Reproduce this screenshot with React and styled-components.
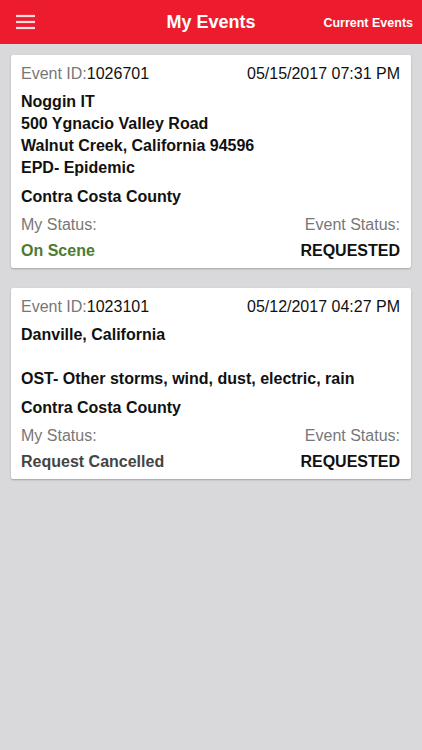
import React from 'react'
import styled, { createGlobalStyle } from 'styled-components'

const GlobalStyle = createGlobalStyle`
  html, body {
    margin: 0;
    padding: 0;
    background: #d9d9db;
  }
  body {
    font-family: "Liberation Sans", Arial, sans-serif;
    -webkit-font-smoothing: antialiased;
  }
`

const Screen = styled.div`
  width: 422px;
  min-height: 750px;
  background: #d9d9db;
  display: flex;
  flex-direction: column;
`

const Header = styled.div`
  height: 44px;
  background: #ec1c2e;
  display: grid;
  grid-template-columns: 1fr auto 1fr;
  align-items: center;
  color: #fff;
`

const MenuButton = styled.div`
  padding-left: 16px;
  display: flex;
  align-items: center;
`

const Title = styled.div`
  font-size: 18px;
  font-weight: bold;
  padding-top: 1px;
`

const HeaderLink = styled.div`
  justify-self: end;
  padding-right: 9px;
  padding-top: 1px;
  font-size: 12.5px;
  font-weight: bold;
`

const List = styled.div`
  display: flex;
  flex-direction: column;
  gap: 20px;
  padding: 11px 11px;
`

const Card = styled.div`
  background: #fff;
  border-radius: 2px;
  box-shadow: 0 1px 2px rgba(0, 0, 0, 0.25);
  padding: 8px 11px 6px 10px;
  display: flex;
  flex-direction: column;
  font-size: 16px;
  line-height: 22px;
  color: #111;
`

const Row = styled.div`
  display: flex;
  justify-content: space-between;
  align-items: baseline;
  margin-top: ${p => p.$gap || 0}px;
`

const Label = styled.span`
  color: #777;
`

const Value = styled.span`
  color: #111;
`

const Details = styled.div`
  margin-top: 6px;
  font-weight: bold;
  white-space: pre-line;
`

const County = styled.div`
  margin-top: 7px;
  font-weight: bold;
`

const Status = styled.span`
  font-weight: bold;
  color: ${p => p.$color || '#111'};
`

const Hamburger = () => (
  <svg width="20" height="16" viewBox="0 0 20 16">
    <g stroke="rgba(255,255,255,0.85)" strokeWidth="2.2">
      <line x1="0" y1="2" x2="19" y2="2" />
      <line x1="0" y1="8" x2="19" y2="8" />
      <line x1="0" y1="14" x2="19" y2="14" />
    </g>
  </svg>
)

const events = [
  {
    id: '1026701',
    date: '05/15/2017 07:31 PM',
    details: 'Noggin IT\n500 Ygnacio Valley Road\nWalnut Creek, California 94596\nEPD- Epidemic',
    county: 'Contra Costa County',
    myStatus: 'On Scene',
    myStatusColor: '#4d7b2f',
    eventStatus: 'REQUESTED',
  },
  {
    id: '1023101',
    date: '05/12/2017 04:27 PM',
    details: 'Danville, California\n\u00a0\nOST- Other storms, wind, dust, electric, rain',
    county: 'Contra Costa County',
    myStatus: 'Request Cancelled',
    myStatusColor: '#454545',
    eventStatus: 'REQUESTED',
  },
]

const EventCard = ({ event }) => (
  <Card>
    <Row>
      <span>
        <Label>Event ID:</Label>
        <Value>{event.id}</Value>
      </span>
      <Value>{event.date}</Value>
    </Row>
    <Details>{event.details}</Details>
    <County>{event.county}</County>
    <Row $gap={6}>
      <Label>My Status:</Label>
      <Label>Event Status:</Label>
    </Row>
    <Row $gap={4}>
      <Status $color={event.myStatusColor}>{event.myStatus}</Status>
      <Status>{event.eventStatus}</Status>
    </Row>
  </Card>
)

export default function App() {
  return (
    <Screen>
      <GlobalStyle />
      <Header>
        <MenuButton>
          <Hamburger />
        </MenuButton>
        <Title>My Events</Title>
        <HeaderLink>Current Events</HeaderLink>
      </Header>
      <List>
        {events.map(e => (
          <EventCard key={e.id} event={e} />
        ))}
      </List>
    </Screen>
  )
}
